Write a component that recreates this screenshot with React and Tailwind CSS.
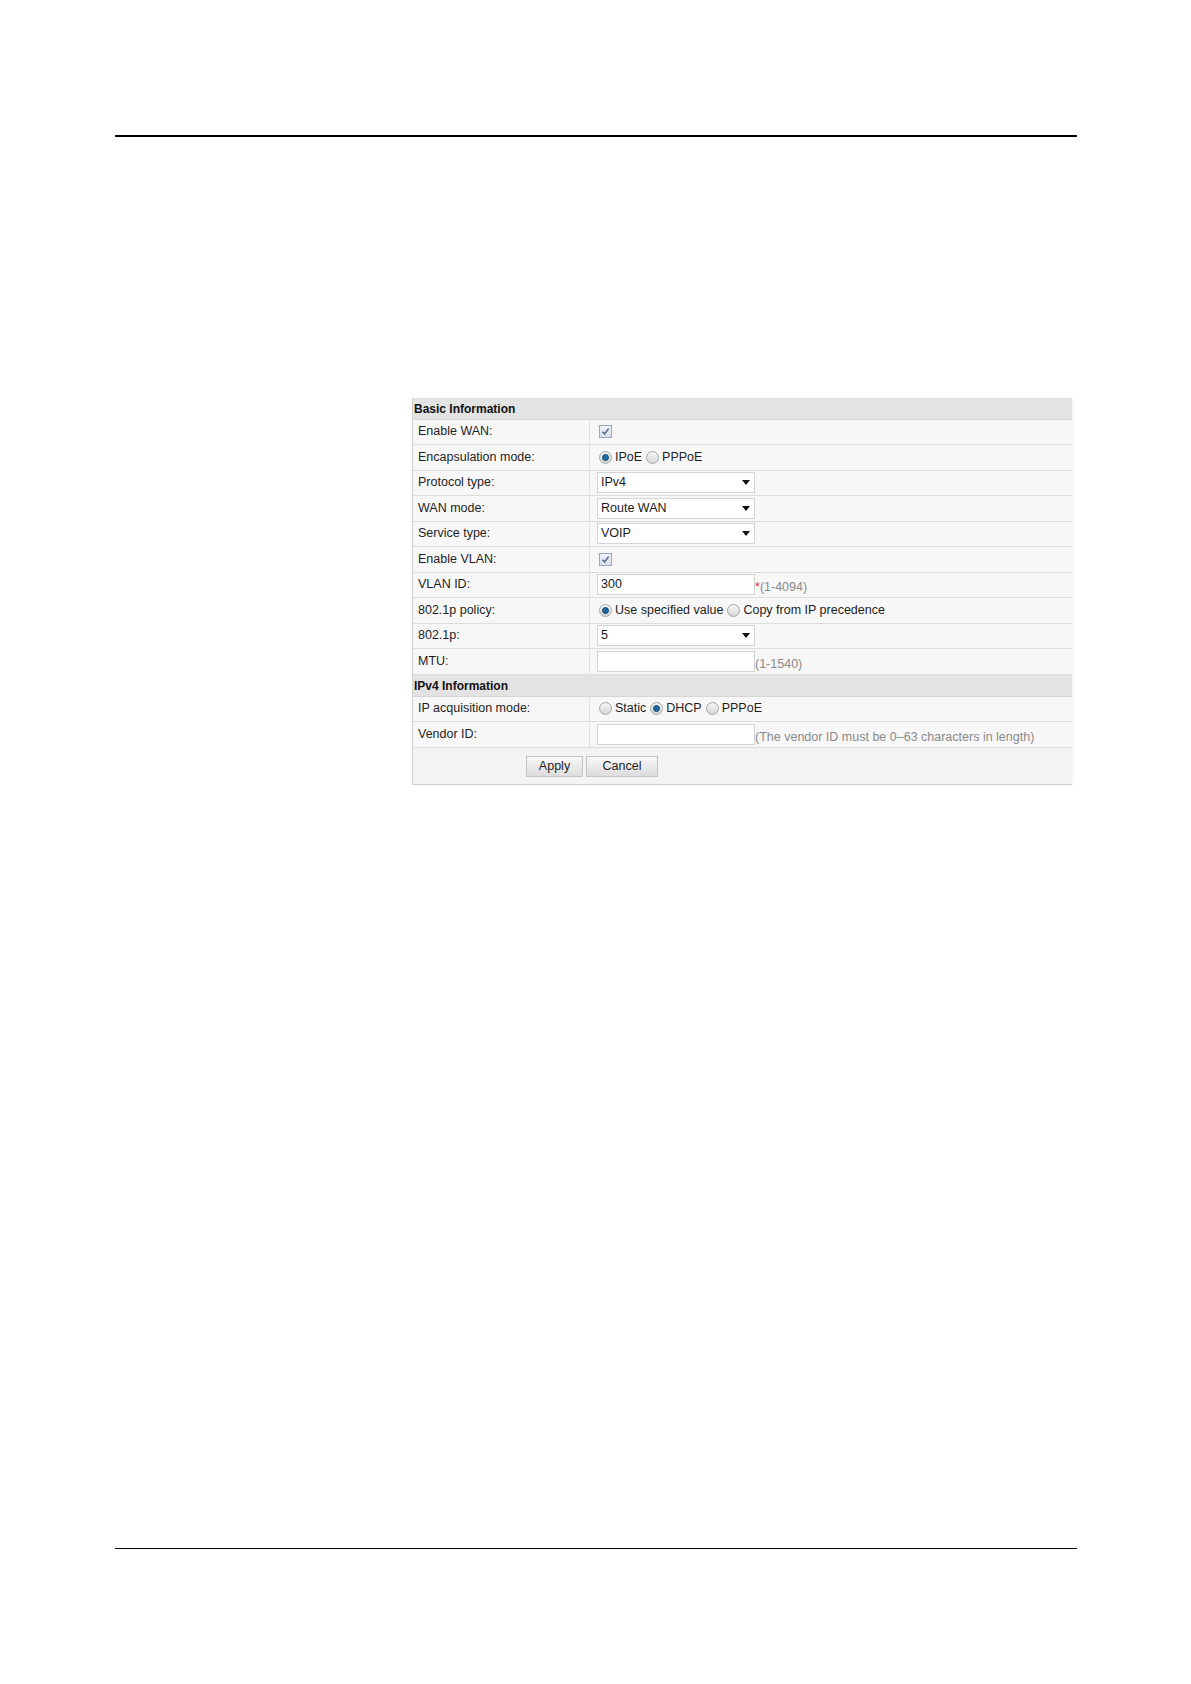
import React from 'react';

const font = { fontFamily: '"Liberation Sans", Arial, sans-serif' };

function Checkbox() {
  return (
    <span className="inline-flex w-[13px] h-[13px] items-center justify-center border border-[#9aa6bf] bg-gradient-to-b from-[#f0f2f8] to-[#d9deea]">
      <svg width="9" height="9" viewBox="0 0 9 9">
        <path d="M1.5 4.8 L3.6 7 L7.6 1.6" fill="none" stroke="#4a5c94" strokeWidth="1.4" />
      </svg>
    </span>
  );
}

function Radio({ checked }) {
  return (
    <span className="inline-flex w-[13px] h-[13px] rounded-full items-center justify-center border border-[#a8a8a8] bg-gradient-to-b from-[#f6f6f6] to-[#d6d6d6]">
      {checked && <span className="w-[7px] h-[7px] rounded-full bg-[#1d6aa5] border border-[#134a73]" />}
    </span>
  );
}

function Select({ value }) {
  return (
    <div className="w-[158px] h-[21px] bg-white border border-[#d4d4d4] flex items-center justify-between pl-[3px] pr-[4px] text-[12.5px] text-[#1a1a1a]">
      <span>{value}</span>
      <svg width="8" height="5" viewBox="0 0 8 5"><path d="M0 0 H8 L4 5 Z" fill="#111" /></svg>
    </div>
  );
}

function TextInput({ value }) {
  return (
    <div className="w-[158px] h-[21px] bg-white border border-[#d4d4d4] flex items-center pl-[3px] text-[12.5px] text-[#1a1a1a]">
      {value}
    </div>
  );
}

function Hint({ children, star }) {
  return (
    <span className="self-end text-[12.5px] text-[#8a8a8a] leading-[16px]">
      {star && <span className="text-[#e0303a]">*</span>}
      {children}
    </span>
  );
}

function Row({ label, children }) {
  return (
    <div className="flex h-[25.5px] border-b border-[#dcdcdc] bg-[#f7f7f7]">
      <div className="w-[177px] shrink-0 flex items-center pl-[5px] border-r border-[#e2e2e2] text-[12.5px] text-[#1e1e1e]">
        {label}
      </div>
      <div className="flex-1 flex items-center pl-[7px]">{children}</div>
    </div>
  );
}

function RadioOpt({ checked, label }) {
  return (
    <span className="inline-flex items-center gap-[3px] mr-[4px]">
      <Radio checked={checked} />
      <span className="text-[12.5px] text-[#1e1e1e]">{label}</span>
    </span>
  );
}

function Section({ title }) {
  return (
    <div className="h-[22px] bg-[#e3e3e3] border-b border-[#d6d6d6] flex items-center pl-[1px] pt-[1px] text-[12px] font-bold text-[#111]">
      {title}
    </div>
  );
}

export default function App() {
  return (
    <div className="w-[1191px] h-[1684px] bg-white relative" style={font}>
      <div className="pt-[135px] pl-[115px]">
        <div className="w-[962px] h-[1.5px] bg-black" />
      </div>

      <div className="pl-[412px] pt-[261px]">
        <div className="w-[660px] border-l border-b border-[#d0d0d0] shadow-[2px_0_3px_rgba(0,0,0,0.04)]">
          <Section title="Basic Information" />
          <Row label="Enable WAN:"><span className="pl-[2px] flex"><Checkbox /></span></Row>
          <Row label="Encapsulation mode:">
            <span className="pl-[2px] flex items-center">
              <RadioOpt checked label="IPoE" />
              <RadioOpt label="PPPoE" />
            </span>
          </Row>
          <Row label="Protocol type:"><Select value="IPv4" /></Row>
          <Row label="WAN mode:"><Select value="Route WAN" /></Row>
          <Row label="Service type:"><Select value="VOIP" /></Row>
          <Row label="Enable VLAN:"><span className="pl-[2px] flex"><Checkbox /></span></Row>
          <Row label="VLAN ID:">
            <div className="flex items-end h-[21px]">
              <TextInput value="300" />
              <Hint star>(1-4094)</Hint>
            </div>
          </Row>
          <Row label="802.1p policy:">
            <span className="pl-[2px] flex items-center">
              <RadioOpt checked label="Use specified value" />
              <RadioOpt label="Copy from IP precedence" />
            </span>
          </Row>
          <Row label="802.1p:"><Select value="5" /></Row>
          <Row label="MTU:">
            <div className="flex items-end h-[21px]">
              <TextInput value="" />
              <Hint>(1-1540)</Hint>
            </div>
          </Row>
          <Section title="IPv4 Information" />
          <Row label="IP acquisition mode:">
            <span className="pl-[2px] flex items-center">
              <RadioOpt label="Static" />
              <RadioOpt checked label="DHCP" />
              <RadioOpt label="PPPoE" />
            </span>
          </Row>
          <Row label="Vendor ID:">
            <div className="flex items-end h-[21px]">
              <TextInput value="" />
              <Hint>(The vendor ID must be 0–63 characters in length)</Hint>
            </div>
          </Row>
          <div className="h-[36px] bg-[#f3f3f3] flex items-start pt-[8px] pl-[113px] gap-[3px]">
            <button className="w-[57px] h-[21px] border border-[#c4c4c4] bg-gradient-to-b from-[#f8f8f8] to-[#dcdcdc] text-[12.5px] text-[#1e1e1e]">Apply</button>
            <button className="w-[72px] h-[21px] border border-[#c4c4c4] bg-gradient-to-b from-[#f8f8f8] to-[#dcdcdc] text-[12.5px] text-[#1e1e1e]">Cancel</button>
          </div>
        </div>
      </div>

      <div className="pl-[115px] pt-[763px]">
        <div className="w-[962px] h-[1.5px] bg-black" />
      </div>
    </div>
  );
}
